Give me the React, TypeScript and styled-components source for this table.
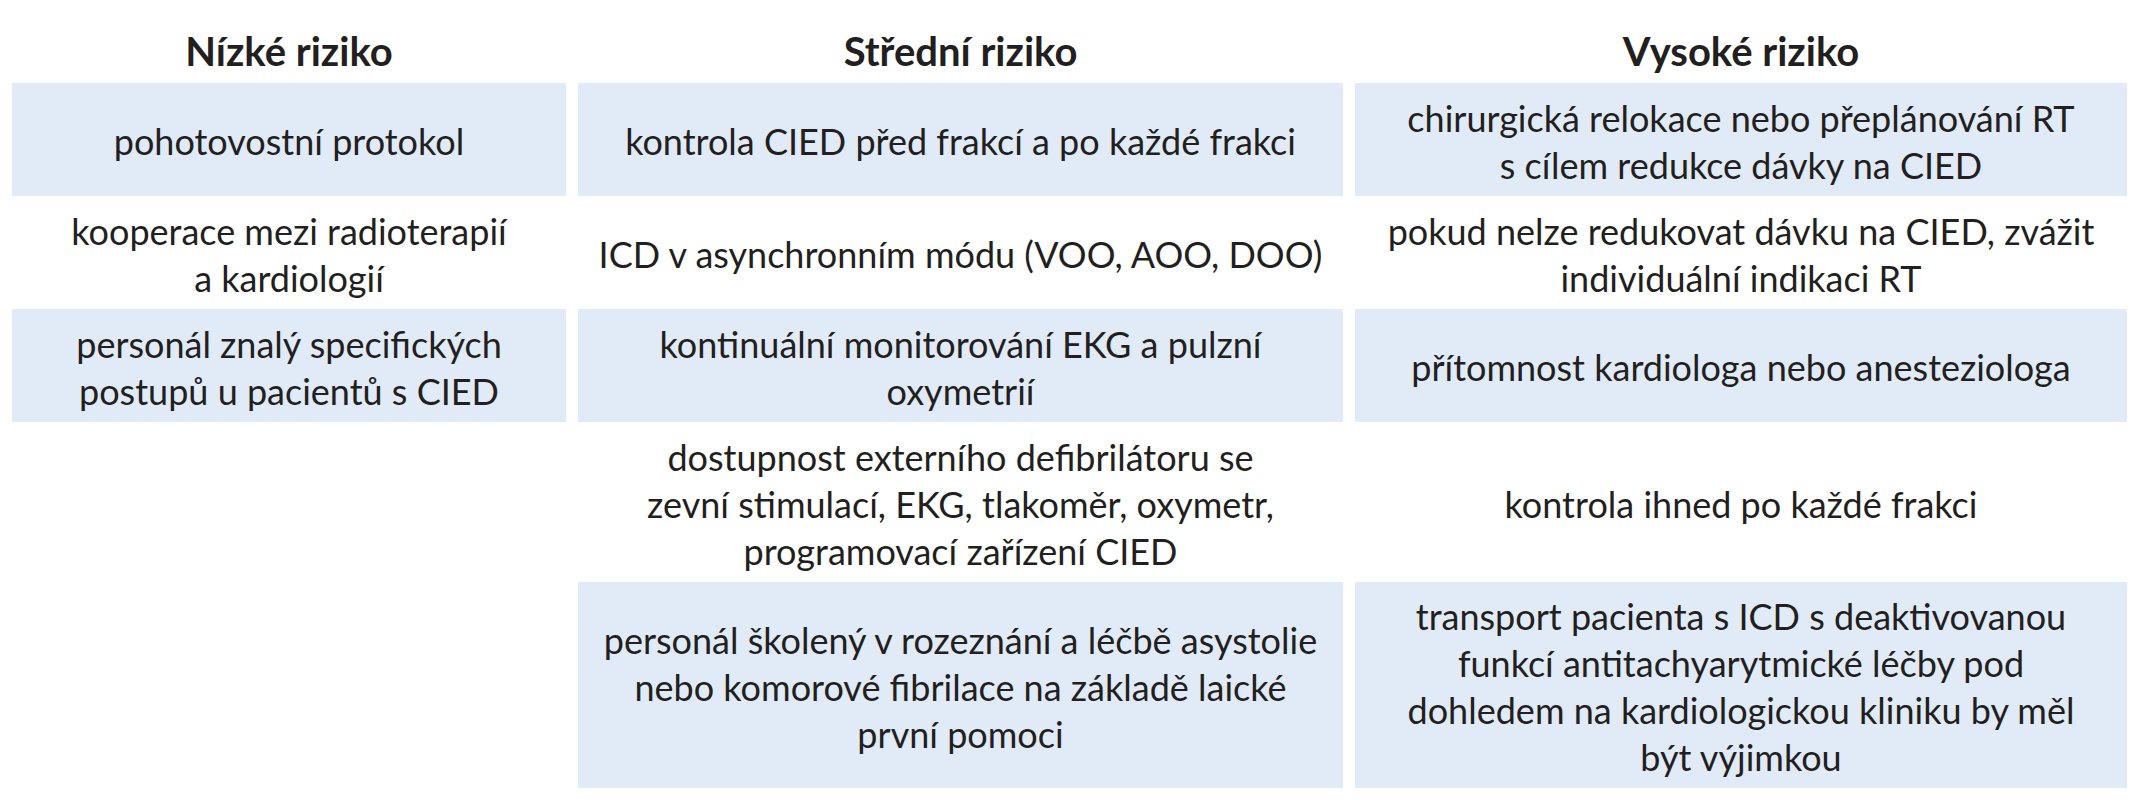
import { FunctionComponent } from 'react';
import styled, { createGlobalStyle } from 'styled-components';

const GlobalStyle = createGlobalStyle`
  html, body {
    margin: 0;
    padding: 0;
    background: #ffffff;
  }
  body {
    font-family: Lato, 'Open Sans', sans-serif;
    color: #231f20;
  }
`;

const Table = styled.div`
  display: grid;
  grid-template-columns: 554px 765px 772px;
  grid-template-rows: 83px 113px 113px 113px 160px 206px;
  column-gap: 12px;
  padding-left: 12px;
`;

const HeadCell = styled.div`
  display: flex;
  align-items: flex-end;
  justify-content: center;
  padding-bottom: 8px;
  font-size: 40px;
  font-weight: 700;
`;

const Cell = styled.div<{ $shaded?: boolean }>`
  display: flex;
  align-items: center;
  justify-content: center;
  text-align: center;
  padding-top: 4px;
  font-size: 36px;
  line-height: 47px;
  white-space: nowrap;
  background: ${props => (props.$shaded ? '#e0ebf7' : 'transparent')};
`;

type Row = {
  shaded: boolean;
  cells: string[][];
};

const headers = ['Nízké riziko', 'Střední riziko', 'Vysoké riziko'];

const rows: Row[] = [
  {
    shaded: true,
    cells: [
      ['pohotovostní protokol'],
      ['kontrola CIED před frakcí a po každé frakci'],
      ['chirurgická relokace nebo přeplánování RT', 's cílem redukce dávky na CIED'],
    ],
  },
  {
    shaded: false,
    cells: [
      ['kooperace mezi radioterapií', 'a kardiologií'],
      ['ICD v asynchronním módu (VOO, AOO, DOO)'],
      ['pokud nelze redukovat dávku na CIED, zvážit', 'individuální indikaci RT'],
    ],
  },
  {
    shaded: true,
    cells: [
      ['personál znalý specifických', 'postupů u pacientů s CIED'],
      ['kontinuální monitorování EKG a pulzní', 'oxymetrií'],
      ['přítomnost kardiologa nebo anesteziologa'],
    ],
  },
  {
    shaded: false,
    cells: [
      [],
      [
        'dostupnost externího defibrilátoru se',
        'zevní stimulací, EKG, tlakoměr, oxymetr,',
        'programovací zařízení CIED',
      ],
      ['kontrola ihned po každé frakci'],
    ],
  },
  {
    shaded: true,
    cells: [
      [],
      [
        'personál školený v rozeznání a léčbě asystolie',
        'nebo komorové fibrilace na základě laické',
        'první pomoci',
      ],
      [
        'transport pacienta s ICD s deaktivovanou',
        'funkcí antitachyarytmické léčby pod',
        'dohledem na kardiologickou kliniku by měl',
        'být výjimkou',
      ],
    ],
  },
];

const Lines: FunctionComponent<{ lines: string[] }> = ({ lines }) => (
  <span>
    {lines.map((line, i) => (
      <span key={i}>
        {i > 0 && <br />}
        {line}
      </span>
    ))}
  </span>
);

const App: FunctionComponent = () => {
  return (
    <>
      <GlobalStyle />
      <Table>
        {headers.map(h => (
          <HeadCell key={h}>{h}</HeadCell>
        ))}
        {rows.map((row, r) =>
          row.cells.map((lines, c) => (
            <Cell key={`${r}-${c}`} $shaded={row.shaded && lines.length > 0}>
              <Lines lines={lines} />
            </Cell>
          )),
        )}
      </Table>
    </>
  );
};

export default App;
